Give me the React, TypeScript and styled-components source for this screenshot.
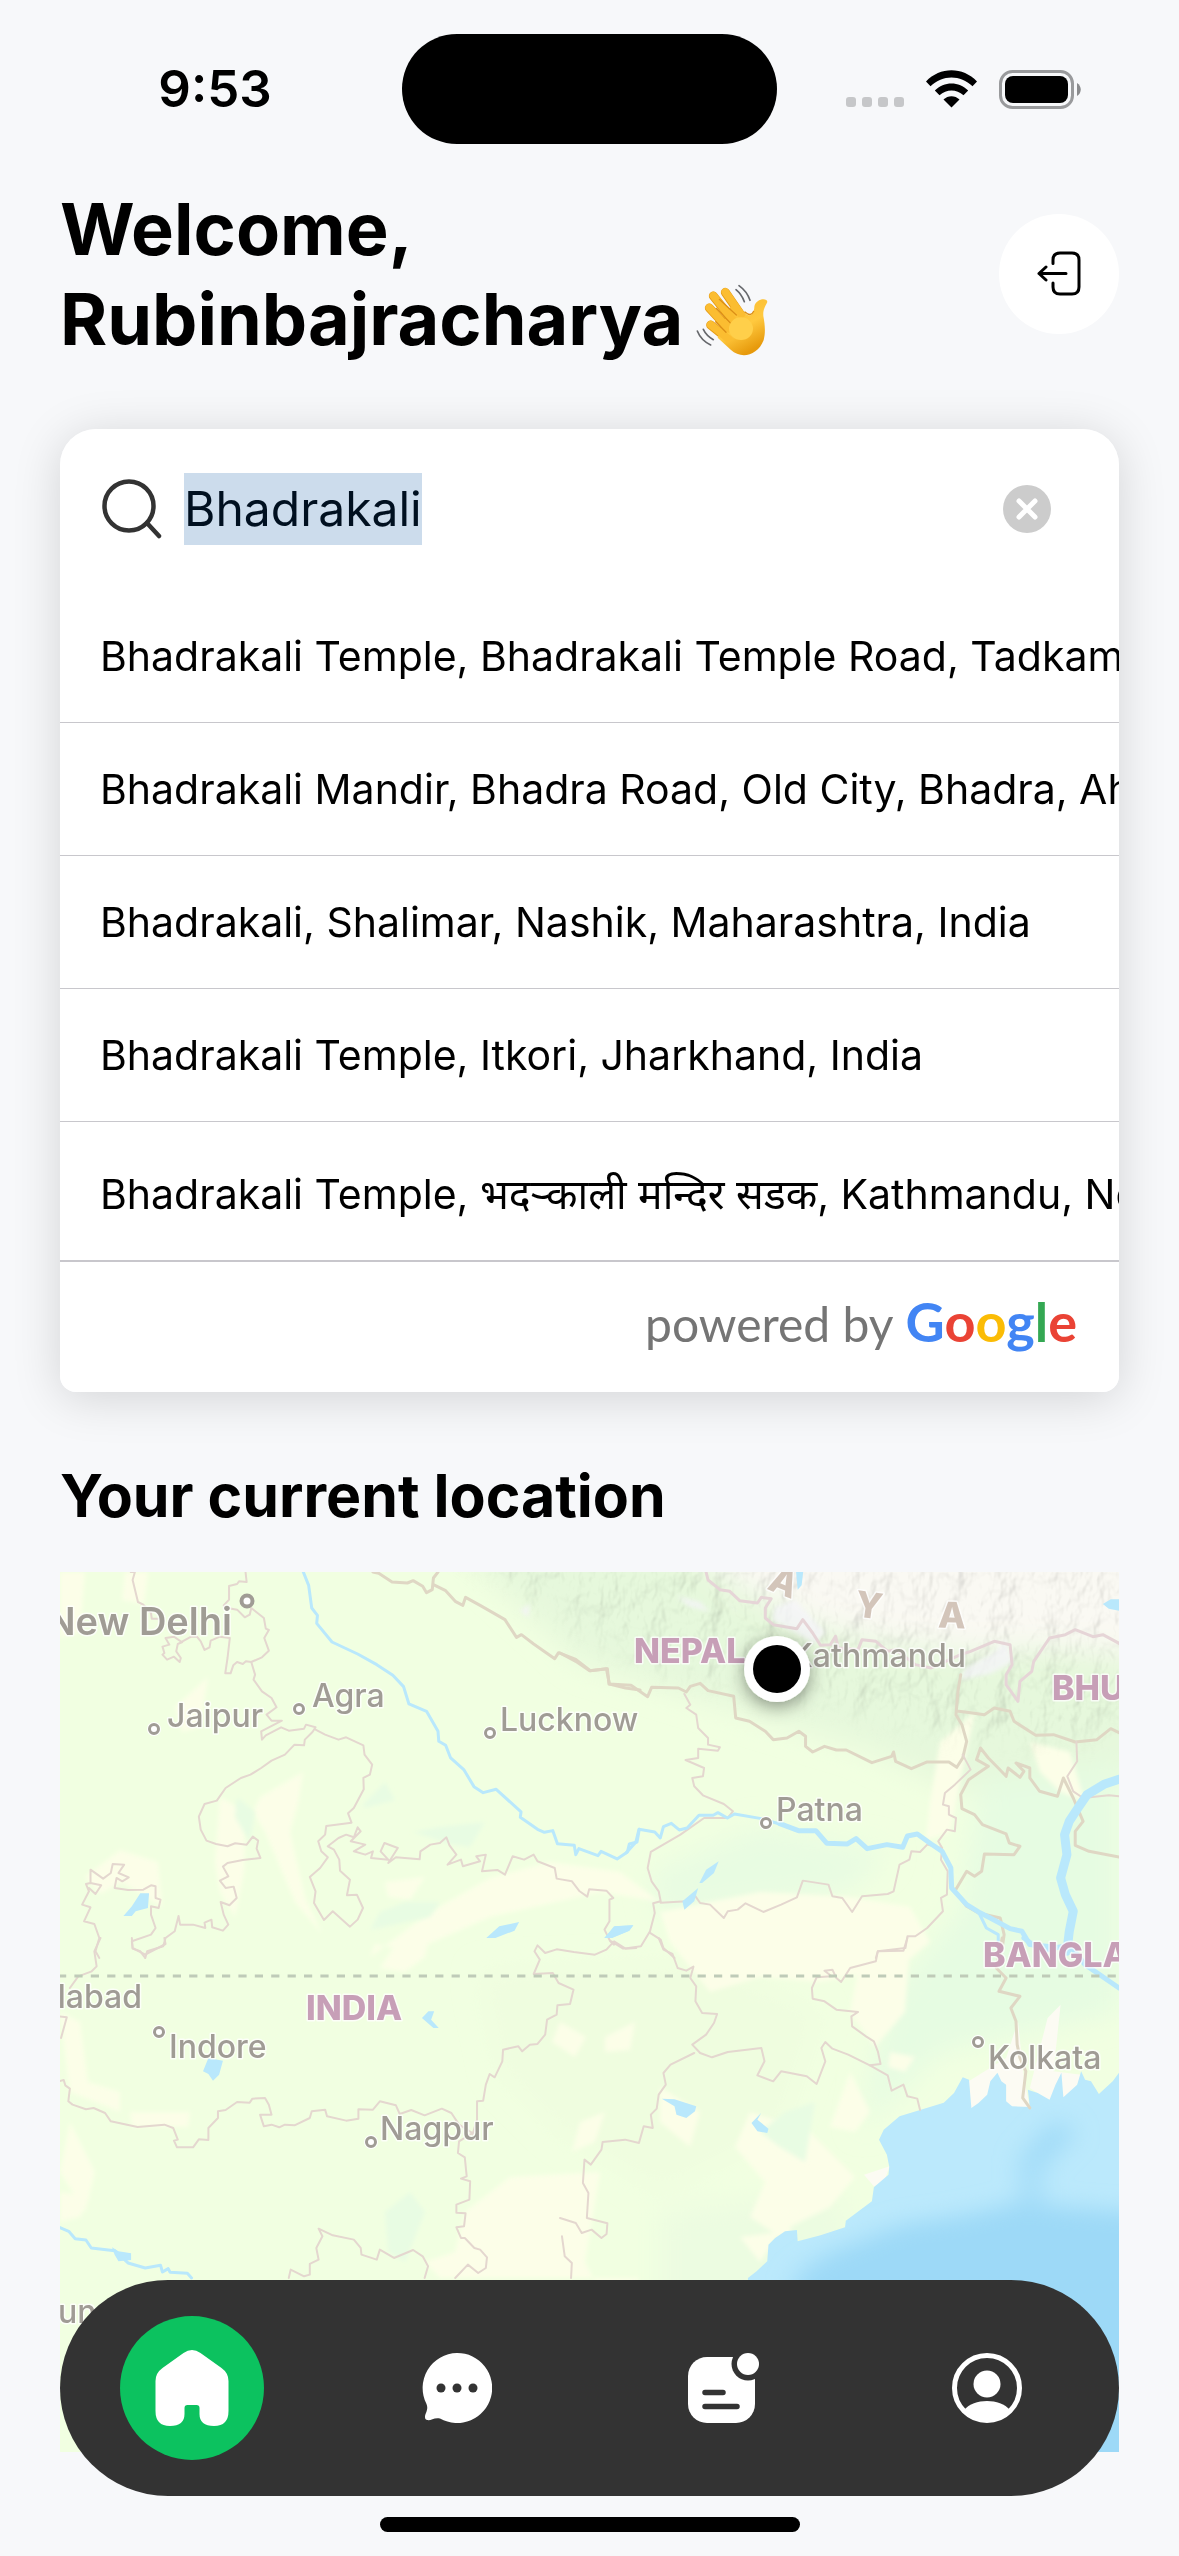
import React, { useEffect, useRef } from "react";
import styled, { createGlobalStyle } from "styled-components";

const sans = `Inter, "Noto Sans", "Liberation Sans", sans-serif`;

const GlobalStyle = createGlobalStyle`
  * { box-sizing: border-box; }
  body { margin: 0; background: #f7f8fa; color: #000; font-family: ${sans}; }
  button { border: 0; padding: 0; background: none; font: inherit; color: inherit; cursor: pointer; }
  svg { display: block; flex: none; }
`;

const Screen = styled.div`
  padding: 34px 60px 102px;
`;

const StatusBar = styled.div`
  display: grid;
  grid-template-columns: 1fr 375px 1fr;
  align-items: center;
  margin: 0 -60px 40px;
`;

const Time = styled.time`
  padding-left: 28px;
  text-align: center;
  font-size: 51px;
  font-weight: 600;
  line-height: 60px;
`;

const Island = styled.div`
  height: 110px;
  border-radius: 55px;
  background: #000;
`;

const StatusIcons = styled.div`
  display: flex;
  justify-content: center;
  align-items: center;
  gap: 22px;
  padding-right: 30px;
`;

const Header = styled.header`
  display: flex;
  justify-content: space-between;
  align-items: center;
  margin-bottom: 65px;
`;

const Title = styled.h1`
  margin: 0;
  font-size: 72px;
  line-height: 90px;
  font-weight: 700;
`;

const NameLine = styled.span`
  display: flex;
  align-items: center;
  gap: 12px;
`;

const RoundButton = styled.button`
  display: grid;
  place-items: center;
  width: 120px;
  height: 120px;
  border-radius: 50%;
  background: #fff;
`;

const SearchCard = styled.section`
  overflow: hidden;
  border-radius: 36px 36px 16px 16px;
  background: #fff;
`;

const CardShadow = styled.div`
  border-radius: 36px 36px 16px 16px;
  box-shadow: 0 6px 48px rgba(0, 0, 0, 0.15);
  margin-bottom: 68px;
`;

const SearchRow = styled.form`
  display: flex;
  align-items: center;
  gap: 22px;
  padding: 44px 68px 45px 42px;
`;

const SearchInput = styled.input`
  flex: 1;
  min-width: 0;
  height: 72px;
  padding: 0;
  border: 0;
  outline: 0;
  background: transparent;
  color: #000;
  font-family: ${sans};
  font-size: 48px;
  line-height: 72px;
  &::selection { background: #ccdcec; color: #001020; }
`;

const Results = styled.ul`
  list-style: none;
  margin: 0;
  padding: 0;
`;

const ResultItem = styled.li<{ $last?: boolean }>`
  border-bottom: ${(p) => (p.$last ? "2px solid #c8c7cc" : "1px solid #c8c7cc")};
`;

const ResultButton = styled.button<{ $tall?: boolean }>`
  display: block;
  width: 100%;
  padding: 40px;
  padding-top: ${(p) => (p.$tall ? "46px" : "40px")};
  overflow: hidden;
  white-space: nowrap;
  text-align: left;
  font-size: 41px;
  line-height: 52px;
`;

const Attribution = styled.footer`
  display: flex;
  justify-content: flex-end;
  align-items: baseline;
  gap: 12px;
  padding: 28px 42px 36px;
  font-family: Lato, "Liberation Sans", sans-serif;
  font-size: 48px;
  line-height: 64px;
  color: #757575;
`;

const GoogleMark = styled.span`
  font-size: 54px;
  font-weight: 700;
`;

const Letter = styled.span<{ $color: string }>`
  color: ${(p) => p.$color};
`;

const SectionTitle = styled.h2`
  margin: 0 0 40px;
  font-size: 59px;
  line-height: 72px;
  font-weight: 700;
`;

const MapSvg = styled.svg`
  width: 100%;
  height: auto;
  font-family: ${sans};
`;

const Nav = styled.nav`
  position: fixed;
  left: 60px;
  right: 60px;
  bottom: 60px;
  display: flex;
  align-items: center;
  padding: 36px 0;
  border-radius: 108px;
  background: #333;
`;

const NavSlot = styled.div`
  flex: 1;
  display: grid;
  place-items: center;
`;

const NavButton = styled.button<{ $active?: boolean }>`
  display: grid;
  place-items: center;
  width: 144px;
  height: 144px;
  border-radius: 50%;
  background: ${(p) => (p.$active ? "#0cc25f" : "transparent")};
`;

const HomeIndicator = styled.div`
  position: fixed;
  left: 50%;
  bottom: 24px;
  width: 420px;
  height: 15px;
  margin-left: -210px;
  border-radius: 8px;
  background: #000;
`;

const results = [
  "Bhadrakali Temple, Bhadrakali Temple Road, Tadkamalla",
  "Bhadrakali Mandir, Bhadra Road, Old City, Bhadra, Ahmedabad",
  "Bhadrakali, Shalimar, Nashik, Maharashtra, India",
  "Bhadrakali Temple, Itkori, Jharkhand, India",
  "Bhadrakali Temple, भदर्‍काली मन्दिर सडक, Kathmandu, Nepal",
];

const google: [string, string][] = [
  ["G", "#4285f4"], ["o", "#ea4335"], ["o", "#fbbc05"], ["g", "#4285f4"], ["l", "#34a853"], ["e", "#ea4335"],
];

const SignalDots = () => (
  <svg width="58" height="38" viewBox="0 0 58 38" aria-hidden="true">
    {[0, 16, 32, 48].map((x) => <rect key={x} x={x} y="27" width="10" height="10" rx="3" fill="#c6c7c9" />)}
  </svg>
);

const Wifi = () => (
  <svg width="51" height="38" viewBox="0 0 51 38" aria-hidden="true">
    <path d="M0 11.5C14-3.500 37-3.500 51 11.500L46.500 16.200C34.500 4.500 16.500 4.500 4.500 16.200Z" />
    <path d="M8.800 20.500C18 11 33 11 42.200 20.500L37.500 25.300C30.500 19 20.500 19 13.500 25.300Z" />
    <path d="M17.500 29.500C22 25 29 25 33.500 29.500L25.500 37.500Z" />
  </svg>
);

const Battery = () => (
  <svg width="82" height="39" viewBox="0 0 82 39" aria-hidden="true">
    <rect x="1.500" y="1.500" width="72" height="36" rx="12" fill="none" stroke="#999a9c" strokeWidth="3" />
    <rect x="6" y="6" width="63" height="27" rx="8" />
    <path d="M78 13C83 16 83 23 78 26Z" fill="#8a8b8d" />
  </svg>
);

const WavingHand = () => (
  <svg width="74" height="74" viewBox="12 248 222 222" role="img" aria-label="waving hand">
    <defs>
      <linearGradient id="skin" x1="0" y1="0" x2="0.5" y2="1">
        <stop offset="0" stopColor="#f9b82c" />
        <stop offset="0.6" stopColor="#ffc93f" />
        <stop offset="1" stopColor="#e79a0c" />
      </linearGradient>
    </defs>
    <g fill="none" strokeLinecap="round">
      <g stroke="#e59a13" strokeWidth="27">
        <path d="M103 279L152 350M67 290L128 366M55 326L115 390M59 377L112 420" />
      </g>
      <path d="M90 385L122 315L162 340C180 360 190 338 190 322C193 298 229 293 229 308C220 326 216 332 217 350C223 382 223 402 218 422C200 470 150 480 120 452L80 415Z" fill="url(#skin)" />
      <g stroke="#fbbd31" strokeWidth="23">
        <path d="M103 278L150 345M67 289L125 362M55 325L112 388M59 376L112 418" />
      </g>
      <g stroke="#dc8f16" strokeWidth="4">
        <path d="M85 300L136 347M76 327L118 371M74 367L105 399M162 338Q180 354 188 336" />
      </g>
      <ellipse cx="150" cy="388" rx="36" ry="34" fill="#ffcf4a" />
      <g stroke="#66686c" strokeWidth="5">
        <path d="M135 271Q152 285 160 307M144 259Q168 276 177 303M37 390Q46 409 67 421M19 395Q30 423 59 437" />
      </g>
    </g>
  </svg>
);

const LogoutIcon = () => (
  <svg width="46" height="46" viewBox="0 0 46 46" fill="none" stroke="#000" strokeWidth="3" strokeLinecap="round" strokeLinejoin="round" aria-hidden="true">
    <path d="M17 12.500V9Q17 2 24 2H36Q43 2 43 9V36Q43 43 36 43H24Q17 43 17 36V32M30 22.500H3M10 16L3 22.500L10 29" />
  </svg>
);

const SearchIcon = () => (
  <svg width="60" height="60" viewBox="0 0 60 60" fill="none" stroke="#333" strokeWidth="4.500" strokeLinecap="round" aria-hidden="true">
    <circle cx="27" cy="27" r="24.500" />
    <path d="M45 44L57 57" />
  </svg>
);

const ClearIcon = () => (
  <svg width="48" height="48" viewBox="0 0 48 48" aria-hidden="true">
    <circle cx="24" cy="24" r="24" fill="#ccc" />
    <path d="M16 16L32 32M32 16L16 32" stroke="#fff" strokeWidth="5" strokeLinecap="round" />
  </svg>
);

const HomeIcon = () => (
  <svg width="74" height="76" viewBox="0 0 73 76" fill="#fff" aria-hidden="true">
    <path d="M28 3Q36.500 -3 45 3L66 18Q73 23 73 31V61Q73 76 58.500 76Q44 76 44 64V58Q44 55 41 55H32Q29 55 29 58V64Q29 76 14.500 76Q0 76 0 61V31Q0 23 7 18Z" />
  </svg>
);

const ChatIcon = () => (
  <svg width="70" height="70" viewBox="0 0 70 70" aria-hidden="true">
    <path d="M35 0A35 35 0 1 1 18 65.500C12 64 9 68 5 67C2 66 3 62 4 60C5 57 6 55 4.500 51A35 35 0 0 1 35 0Z" fill="#fff" />
    <g fill="#333"><circle cx="19" cy="35" r="4.500" /><circle cx="35" cy="35" r="4.500" /><circle cx="51" cy="35" r="4.500" /></g>
  </svg>
);

const ListIcon = () => (
  <svg width="74" height="70" viewBox="-3 0 74 70" aria-hidden="true">
    <rect x="0" y="4" width="67" height="66" rx="19" fill="#fff" />
    <circle cx="60" cy="11" r="16.500" fill="#333" />
    <circle cx="60" cy="11" r="11" fill="#fff" />
    <path d="M17 39.500H35M17 53.500H49" stroke="#333" strokeWidth="5.500" strokeLinecap="round" />
  </svg>
);

const ProfileIcon = () => (
  <svg width="70" height="70" viewBox="0 0 70 70" aria-hidden="true">
    <circle cx="35" cy="35" r="32.500" fill="none" stroke="#fff" strokeWidth="5" />
    <circle cx="35" cy="31" r="13.500" fill="#fff" />
    <path d="M12 57C22 45 48 45 58 57Q48 68 35 68T12 57Z" fill="#fff" />
  </svg>
);

const tiles = {
  nw: "translate(-20 -14) scale(.3827 .3333)",
  ne: "translate(500 -14) scale(.3948 .3333)",
  sw: "translate(-20 366) scale(.3827 .3333)",
  se: "translate(500 366) scale(.3948 .3333)",
};

const Line = styled.path`
  fill: none;
  stroke-linejoin: round;
  stroke-linecap: round;
  vector-effect: non-scaling-stroke;
`;

const Border = styled(Line)`
  stroke: #e4d7cf;
  stroke-width: 2px;
`;

const Frontier = styled(Line)`
  stroke: #dfd7c4;
  stroke-width: 3px;
`;

const HighFrontier = styled(Line)`
  stroke: #e6d5d7;
  stroke-width: 3px;
`;

const riverWidth = { thin: "3px", medium: "5px", wide: "9px" };

const River = styled(Line)<{ $size?: keyof typeof riverWidth }>`
  stroke: #b9e8fc;
  stroke-width: ${(p) => riverWidth[p.$size ?? "thin"]};
`;

const labelSize = { city: 32, capital: 38, country: 34, range: 36 };
const labelWeight = { city: 500, capital: 600, country: 800, range: 800 };
const labelColor = { city: "#a09c95", capital: "#a09c95", country: "#c79fb7", range: "#d3c5ba" };

const MapText = styled.text<{ $kind?: keyof typeof labelSize }>`
  paint-order: stroke;
  stroke: rgba(255, 255, 255, 0.75);
  stroke-width: 3px;
  stroke-linejoin: round;
  font-size: ${(p) => labelSize[p.$kind ?? "city"]}px;
  font-weight: ${(p) => labelWeight[p.$kind ?? "city"]};
  fill: ${(p) => labelColor[p.$kind ?? "city"]};
`;

const cities = [
  { name: "Jaipur", x: 107, y: 155, dx: 94, dy: 157 },
  { name: "Agra", x: 252, y: 135, dx: 239, dy: 137 },
  { name: "Lucknow", x: 440, y: 159, dx: 430, dy: 161 },
  { name: "Patna", x: 716, y: 249, dx: 706, dy: 251 },
  { name: "Indore", x: 109, y: 486, dx: 99, dy: 460 },
  { name: "Nagpur", x: 320, y: 568, dx: 311, dy: 570 },
  { name: "Kolkata", x: 928, y: 497, dx: 918, dy: 470 },
];

const LocationMap = () => (
  <MapSvg viewBox="0 0 1059 880" role="img" aria-label="Map of northern India and Nepal">
    <defs>
      <filter id="soft" x="-20%" y="-20%" width="140%" height="140%"><feGaussianBlur stdDeviation="14" /></filter>
      <filter id="deep" x="-30%" y="-30%" width="160%" height="160%"><feGaussianBlur stdDeviation="34" /></filter>
      <filter id="edge" x="-10%" y="-10%" width="120%" height="120%"><feGaussianBlur stdDeviation="2" /></filter>
      <filter id="relief" x="0" y="0" width="100%" height="100%">
        <feTurbulence type="fractalNoise" baseFrequency="0.035 0.022" numOctaves="4" seed="7" result="n" />
        <feDiffuseLighting in="n" surfaceScale="9" diffuseConstant="1.05" lightingColor="#fff" result="l">
          <feDistantLight azimuth="225" elevation="68" />
        </feDiffuseLighting>
        <feComposite in="l" in2="SourceAlpha" operator="in" />
      </filter>
      <filter id="pinShadow" x="-60%" y="-60%" width="220%" height="220%">
        <feDropShadow dx="0" dy="5" stdDeviation="9" floodColor="#000" floodOpacity="0.4" />
      </filter>
      <clipPath id="water">
        <path d="M476 1020L498 1000L525 970L528 920L545 900L570 880L600 876L602 910L660 892L722 868L724 848L790 790L795 748L832 710L834 686L828 650L808 605L820 575L860 535L912 516L972 494H1416V1600H476Z" />
      </clipPath>
      <mask id="mountains">
        <path d="M380 -40L1100 -40L1100 155L940 170L830 145L700 115L590 95L500 45Z" fill="#fff" filter="url(#soft)" />
      </mask>
    </defs>
    <rect width="1059" height="880" fill="#f1ffe1" />

    <g filter="url(#soft)">
      <path d="M390 -30L1090 -30L1090 200L900 220L800 175L650 130L520 90Z" fill="#e6f8dc" />
      <path d="M610 -40L1090 -40L1090 85L980 75L920 80L830 70L760 55L680 15Z" fill="#faf9f3" />
      <path d="M920 210L1060 190L1060 440L880 480L800 560L830 420L900 340Z" fill="#e6fce2" />
      <path d="M590 300L700 255L830 280L790 320L600 345Z" fill="#e8fce2" />
      <path d="M420 400L640 390L760 440L720 560L600 620L500 560L440 500Z" fill="#effddf" />
      <path d="M600 640L780 620L790 680L690 760L600 760Z" fill="#ecfce1" />
    </g>

    <g fill="#fcfee8" filter="url(#edge)">
      <path d="M0 0H25L20 60L0 66ZM65 0H88L84 32L62 28ZM115 135L148 105L140 155L122 160ZM200 225L243 200L238 232L230 260L245 325L262 362L235 330L205 260L193 240Z" />
      <path d="M25 305L60 278L98 290L102 335L62 310L40 322ZM155 290L160 225L186 240L184 300L175 345L160 320Z" />
      <path d="M310 385L370 340L430 306L490 290L560 300L600 330L540 320L430 345L350 380L315 372ZM325 310L365 305L350 328L328 325Z" />
      <path d="M600 340L700 320L790 325L850 335L870 370L840 395L760 410L700 405L650 420L610 370Z" />
      <path d="M800 390L850 370L845 440L815 475L790 440ZM870 230L880 170L915 140L900 210L890 260L866 268ZM970 170L1010 180L1025 230L1000 220L980 200Z" />
      <path d="M0 440L20 450L28 510L60 520L60 540L10 520ZM10 550L35 600L25 640L0 600ZM70 540L130 540L128 555L72 555ZM0 620L30 625L20 645L0 650Z" />
      <path d="M500 450L526 465L515 485L492 470ZM545 465L575 450L570 478L545 480ZM600 515L640 540L630 575L600 550ZM520 550L545 540L535 570L512 580Z" />
      <path d="M405 640L450 605L540 600L525 690L550 740L580 706L590 706L600 706L540 706L380 706L365 690L395 680Z" />
      <path d="M690 540L750 560L795 605L770 635L730 655L735 675L690 645L705 610L675 575ZM680 665L720 660L700 690ZM320 396L340 366L370 360L365 385L345 400Z" />
      <path d="M790 500L810 540L795 560L770 555ZM830 480L855 485L845 500L828 495Z" />
    </g>

    <g fill="#e8fce3" filter="url(#edge)">
      <path d="M177 225L195 240L190 270L175 245ZM302 234L325 210L335 228L305 236ZM353 260L380 255L425 250L410 275L390 272ZM325 640L350 620L365 640L345 690L328 680Z" />
      <path d="M370 345L380 330L345 330L320 340L310 358ZM700 560L725 540L755 530L745 590L720 575Z" />
    </g>

    <g mask="url(#mountains)" opacity="0.3" style={{ mixBlendMode: "multiply" }}>
      <rect width="1059" height="240" filter="url(#relief)" />
    </g>
    <g fill="#f6f4fb" opacity="0.7" filter="url(#edge)">
      <path d="M617 24L640 30L650 40L628 34ZM668 30L678 42L672 36ZM715 35L735 28L765 60L755 72L735 60L712 48ZM905 96L935 80L945 68L953 90L930 102L900 108ZM460 38L470 32L468 46Z" />
    </g>

    <g transform={tiles.se}>
      <g fill="#fcfbf3">
        <path d="M1035 430L1130 360L1160 250L1175 420L1190 507L1040 512ZM1190 450L1235 240L1268 200L1250 400L1320 410L1300 470L1240 488ZM770 710L835 685L820 735L795 745Z" />
      </g>
      <path fill="#bbe9fc" d="M476 1020L498 1000L525 970L528 920L545 900L570 880L600 876L602 910L660 892L722 868L724 848L790 790L795 748L832 710L834 686L828 650L808 605L820 575L860 535L912 516L972 494L998 465L1020 418L1036 425L1042 510L1060 495L1082 470L1090 430L1108 404L1118 430L1130 440L1130 490L1145 505L1190 507L1185 455L1210 465L1240 485L1255 440L1270 404L1275 478L1310 440L1320 400L1330 425L1345 430L1365 468L1400 430L1416 404V1600H476Z" />
      <g clipPath="url(#water)">
        <path fill="#9dd9f7" filter="url(#deep)" d="M1260 540L1300 590L1215 690L1215 800L1520 830L1520 1700L540 1700L600 1010L670 950L860 860L1030 830L1175 790L1170 660Z" />
      </g>
    </g>

    <g transform={tiles.nw}>
      <Border d="M237 42L248 42L242 66L256 132L270 140L290 165L292 182L308 182M537 42L540 72L520 70L515 78L494 84L494 125L480 142L490 150L515 155L535 178L548 170L552 150L585 180L590 212L598 216L586 240L598 278L580 298L552 312L538 310L530 318L515 312L505 322L498 346L484 346L490 300L496 240L470 236L446 248L443 268L430 276L420 250L410 236L395 236L370 252L350 236L328 240L338 260L320 266L325 285L320 290L332 305L350 296L365 312L368 300L356 280L360 258L372 252" />
      <Border d="M552 312L562 350L558 365L580 400L605 420L618 448L592 470L605 488L632 488L578 520L580 545L590 532L630 508L650 518L690 512L695 500L720 508L712 522L692 545L690 562L665 560L640 590L605 608L578 630L550 650L525 660L485 690L462 728L430 738L415 776L420 815L435 848L460 858L490 865L510 856L540 860L556 836L570 848L566 872L576 900L530 906L490 915L478 926L492 955L470 968L485 990L506 986L514 1020L495 1042L472 1032L480 1070L492 1100L478 1118L450 1108L448 1085L430 1094L432 1110L400 1100L366 1100L362 1074L352 1120L328 1140L322 1165L280 1180L275 1200" />
      <Border d="M720 515L745 530L780 545L800 538L845 562L848 590L868 620L862 650L845 660L846 694L820 750L805 766L814 794L748 804L745 830L727 850L735 880L752 898L732 930L705 957L720 1000L716 1035L742 1086L765 1060L810 1106L830 1085L844 1050L828 1010L802 1012L810 965L784 938L782 905L768 875L752 865L780 840L800 830L820 838L830 808L838 820L812 850L850 860L820 880L850 890L870 880L865 900L910 905L890 880L900 855L935 870L910 915L930 898L992 904L994 880L1020 860L1045 855L1062 838L1070 862L1088 890L1065 920L1100 905L1105 925L1150 910L1140 895L1165 890L1155 940L1195 936L1215 950L1235 895L1265 905L1290 890L1300 910L1345 930L1350 962L1390 970L1410 1000L1430 1016L1435 994L1480 998L1498 1020L1488 1025L1488 1090L1475 1115L1490 1150L1500 1160" />
      <Border d="M155 1200L145 1180L155 1140L142 1098L115 1090L132 1048L110 1040L128 1000L120 978L132 975L132 935L165 962L185 945L190 918L220 920L205 945L232 958L215 970L200 960L195 990L230 996L270 995L290 982L302 985L302 1020L315 1025L310 1050L290 1045L290 1070L302 1110L290 1130L240 1150L242 1172L262 1180L275 1200M132 975L160 982L145 1008L128 990" />
      <Frontier d="M870 42L885 46L920 72L960 75L975 68L1000 85L1010 104L1025 95L1028 60L1040 42M1028 80L1060 98L1085 130L1105 142L1112 118L1150 142L1215 185L1245 238L1258 230L1290 258L1345 302L1355 284L1400 304L1438 338L1480 332L1488 378L1530 390L1568 396" />
      <River d="M688 42L702 82L710 150L725 172L723 196L763 252L830 288L880 320L922 352L950 386L964 438L1010 460L1040 520L1042 550L1060 562L1073 600L1108 636L1134 686L1158 704L1192 694L1257 762L1255 778L1300 814L1318 823L1340 818L1352 857L1396 862L1400 890L1408 872L1458 893L1466 880L1508 903L1535 882L1540 858L1560 852L1566 814" />
      <path fill="#b9e8fc" d="M262 1006H285L282 1050L250 1060L240 1074H218L240 1045ZM1166 1140L1200 1105L1252 1092L1240 1118L1190 1140ZM1475 1140L1500 1105L1550 1102L1540 1118L1495 1140Z" />
    </g>

    <g transform={tiles.ne}>
      <HighFrontier d="M370 42L375 66L405 95L430 100L455 128L500 135L510 118L535 122L520 150L520 180L540 200L600 212L615 185L640 225L660 262L685 260L698 235L705 270L755 275L765 245L800 250L830 280L850 275L900 320L940 330L1015 290L1040 280L1100 250L1140 260L1145 320L1130 350L1130 380L1160 430L1165 370L1195 340L1200 310L1240 240L1280 230L1305 215L1350 236L1375 230L1416 256" />
      <Frontier d="M0 285L40 310L75 338L120 332L124 378L180 382L222 416L232 388L300 390L320 402L330 385L355 376L375 398L440 415L445 480L480 490L520 520L540 545L575 540L605 520L622 535L622 565L640 582L670 565L700 576L725 576L790 614L840 595L845 582L850 610L890 632L930 612L985 612L1005 628L1020 600L1030 550L1018 500L1003 470L1008 400L1015 350M1010 460L1040 464L1075 470L1100 450L1140 460L1150 490L1205 532L1250 530L1305 552L1360 545L1395 512L1416 524" />
      <Frontier d="M1065 570L1055 605L1085 625L1035 665L1015 710L1018 752L1050 770L1070 800L1130 828L1138 855L1165 865L1150 890L1075 888L1068 940L1050 955L1030 940L1000 1000L1030 1045L1060 1065L1115 1080L1125 1130L1120 1170M1065 570L1085 600L1110 630L1130 655L1135 630L1165 658L1175 640L1155 615L1190 630L1190 660L1215 700L1260 715L1275 660L1300 720L1325 790L1305 820L1305 862L1340 880L1416 897" />
      <Border d="M1308 552L1310 610L1285 655L1300 700L1325 720L1390 712L1416 715M315 408L330 440L320 450L345 470L350 510L375 540L375 560L405 568L400 578L350 572L350 600L318 606L365 630L362 655L335 660L340 685L362 712L415 738L438 760L425 780L365 780L305 830L230 882L222 930L232 970L250 1000L255 1030L236 1036L240 1065L228 1120L205 1165L160 1172L130 1150M255 1034L320 1030L340 1010L355 1035L380 1040L415 1080L425 1060L450 1055L470 1036L515 1062L560 1040L600 1018L615 968L680 980L690 1015L715 1020L740 1062L765 1015L830 1008L845 1000L860 920L885 905L890 880L912 882L930 860L965 870" />
      <Border d="M1020 590L1040 635L1000 680L975 705L970 740L985 745L985 770L1003 780L1000 820L980 815L958 850L968 870L965 905L982 940L980 1010L965 1020L970 1060L930 1110L900 1135L880 1135L875 1170L805 1180L800 1200M228 1125L255 1145L262 1170L290 1200" />
      <River d="M168 884L192 853L200 814L240 822L254 840L262 806L282 796L302 816L322 810L352 772L388 772L400 764L424 780L442 768L510 782L550 796" />
      <River $size="medium" d="M555 796L604 818L648 818L676 856L728 858L750 842L778 872L828 860L868 868L880 834L905 828L940 858L968 880L990 930L992 990L1030 1040L1060 1062L1090 1080L1140 1112L1170 1120L1190 1160L1280 1170" />
      <River d="M1060 1062L1080 1110L1110 1130L1110 1160" />
      <River $size="wide" d="M1416 664L1380 678L1335 710L1312 750L1290 790L1278 830L1284 890L1268 960L1280 1010L1300 1060L1290 1120L1284 1180" />
      <path fill="#b9e8fc" d="M598 42H616L612 82L602 95ZM1375 138L1395 124H1416V158L1390 152ZM402 910L390 945L360 975H353L370 935ZM350 990L340 1030L315 1055L310 1030ZM112 1140L140 1105L186 1102L175 1118L130 1140Z" />
    </g>

    <g transform={tiles.sw}>
      <Border d="M158 0L142 40L148 85L135 100L100 115L78 150M50 235L70 238L55 300M50 430L62 426L66 442L78 452L74 490L85 500L120 514L140 510L170 525L185 550L255 567L325 560L348 570L360 605L350 608L358 628L400 628L415 604L440 606L440 570L465 540L465 520L485 516L515 492L548 494L555 482L588 480L598 500L605 530L575 530L585 565L605 560L625 568L640 560L665 562L705 540L710 520L745 515L750 535L800 548L832 542L832 514L870 515L888 490L930 502L940 528L970 516L1005 532L1050 512L1075 525L1095 560L1130 585L1095 610L1092 645L1110 658L1115 715L1100 722L1124 730L1122 785L1088 800V824L1112 826L1108 865L1088 868L1100 900L1110 900L1135 930L1150 935L1168 958L1165 990L1145 1005L1118 980L1085 1020" />
      <Border d="M1130 590L1142 545L1142 490L1158 488L1165 440L1175 408L1188 418L1208 370L1210 335L1250 325L1260 340L1280 320L1300 318L1320 290L1325 245L1350 230L1352 202L1385 198L1394 155L1355 135L1340 105L1290 108L1306 65L1292 40L1300 22L1320 45L1350 34L1395 42L1450 50L1480 35L1500 10L1530 32L1558 30M650 1020L655 995L690 1015L705 1010L705 978L728 965L722 930L738 895L728 872L765 892L820 905L838 930L840 950L880 965L888 935L925 960L975 936L1000 955L1014 985L1005 1020M240 0L242 30L275 50L328 18L325 0" />
      <River d="M50 868L75 880L92 902L120 906L134 930L195 938L230 975L275 990L315 982L320 1002L335 992L340 1003L385 1006L396 1020" />
      <path fill="#b9e8fc" d="M440 360L478 368L468 410L452 428L440 408L426 400ZM1015 220H1030L1022 245L1042 270H1028L998 240ZM188 928L205 940L238 946V966L205 970L195 950Z" />
    </g>

    <g transform={tiles.se}>
      <Border d="M250 0L262 35L285 48L298 90L320 98L338 86L330 120L345 145L343 190L360 225L398 228L390 255L370 290L335 320L355 345L385 358L425 342L510 330L518 370L500 412L540 430L560 400L625 415L650 438L672 370L662 330L672 312L690 332L730 350L785 382L812 378L805 340L795 310L775 295L740 265L738 235L755 222L700 215L670 190L640 182L638 150L650 118L688 115L670 98L690 95L700 120L712 132L735 90L800 70L805 40L870 38L880 0" />
      <Border d="M340 345L280 380L262 405L268 440L250 470L245 512L230 530L235 570L212 565L200 615L165 605L108 612L105 635L78 680L62 665L58 735L72 765L68 840L120 856L118 888L105 900L80 875L55 885L40 855L0 840M5 895L12 955L30 975L28 1020M785 382L830 412L840 458L870 440L880 475L905 482L912 516" />
      <Frontier d="M1120 0L1105 90L1130 120L1112 160L1165 175L1142 210L1155 250L1158 320L1165 360L1180 400L1172 480L1190 510" />
      <River $size="medium" d="M1175 0L1220 40L1290 20L1330 80L1416 150" />
      <path fill="#b9e8fc" d="M258 482L290 484L345 505L342 520L320 540L295 530L290 505ZM510 524L500 545L528 572L525 585L500 580L485 555Z" />
    </g>

    <path d="M-2 404H1059" stroke="#bfcbb8" strokeWidth="3" strokeDasharray="8.200 8.200" />

    <MapText $kind="range" transform="translate(724 10) rotate(22)" textAnchor="middle" y="13">A</MapText>
    <MapText $kind="range" transform="translate(809 33) rotate(8)" textAnchor="middle" y="13">Y</MapText>
    <MapText $kind="range" transform="translate(892 43) rotate(2)" textAnchor="middle" y="13">A</MapText>
    <MapText $kind="country" x="574" y="91">NEPAL</MapText>
    <MapText $kind="country" x="992" y="128">BHUTAN</MapText>
    <MapText $kind="country" x="923" y="395">BANGLADESH</MapText>
    <MapText $kind="country" x="246" y="448">INDIA</MapText>
    <MapText $kind="capital" x="172" y="63" textAnchor="end">New Delhi</MapText>
    <MapText x="906" y="95" textAnchor="end">Kathmandu</MapText>
    <MapText x="82" y="436" textAnchor="end">labad</MapText>
    <MapText x="-2" y="751">un</MapText>
    <circle cx="187" cy="29" r="5.500" fill="#fff" stroke="#a09c95" strokeWidth="4" />
    {cities.map((c) => (
      <g key={c.name}>
        <circle cx={c.dx} cy={c.dy} r="7" fill="#fff" />
        <circle cx={c.dx} cy={c.dy} r="4.500" fill="#fff" stroke="#a09c95" strokeWidth="3" />
        <MapText x={c.x} y={c.y}>{c.name}</MapText>
      </g>
    ))}

    <circle cx="717" cy="97" r="33" fill="#fff" filter="url(#pinShadow)" />
    <circle cx="717" cy="97" r="24" />
  </MapSvg>
);

const tabs = [
  { label: "Home", Icon: HomeIcon, active: true },
  { label: "Messages", Icon: ChatIcon },
  { label: "Rides", Icon: ListIcon },
  { label: "Profile", Icon: ProfileIcon },
];

export default function App() {
  const input = useRef<HTMLInputElement>(null);

  useEffect(() => {
    input.current?.focus({ preventScroll: true });
    input.current?.select();
  }, []);

  return (
    <>
      <GlobalStyle />
      <Screen>
        <StatusBar>
          <Time>9:53</Time>
          <Island />
          <StatusIcons>
            <SignalDots />
            <Wifi />
            <Battery />
          </StatusIcons>
        </StatusBar>

        <Header>
          <Title>
            Welcome,
            <NameLine>Rubinbajracharya <WavingHand /></NameLine>
          </Title>
          <RoundButton type="button" aria-label="Sign out"><LogoutIcon /></RoundButton>
        </Header>

        <main>
          <CardShadow>
            <SearchCard>
              <SearchRow onSubmit={(e) => e.preventDefault()}>
                <SearchIcon />
                <SearchInput ref={input} type="text" aria-label="Search for a place" defaultValue="Bhadrakali" spellCheck={false} />
                <button type="button" aria-label="Clear search"><ClearIcon /></button>
              </SearchRow>
              <Results>
                {results.map((place, i) => {
                  const last = i === results.length - 1;
                  return (
                    <ResultItem key={place} $last={last}>
                      <ResultButton type="button" $tall={last}>{place}</ResultButton>
                    </ResultItem>
                  );
                })}
              </Results>
              <Attribution>
                powered by
                <GoogleMark>
                  {google.map(([ch, color], i) => <Letter key={i} $color={color}>{ch}</Letter>)}
                </GoogleMark>
              </Attribution>
            </SearchCard>
          </CardShadow>

          <SectionTitle>Your current location</SectionTitle>
          <LocationMap />
        </main>
      </Screen>

      <Nav aria-label="Main">
        {tabs.map(({ label, Icon, active }) => (
          <NavSlot key={label}>
            <NavButton type="button" $active={active} aria-label={label}><Icon /></NavButton>
          </NavSlot>
        ))}
      </Nav>
      <HomeIndicator />
    </>
  );
}
